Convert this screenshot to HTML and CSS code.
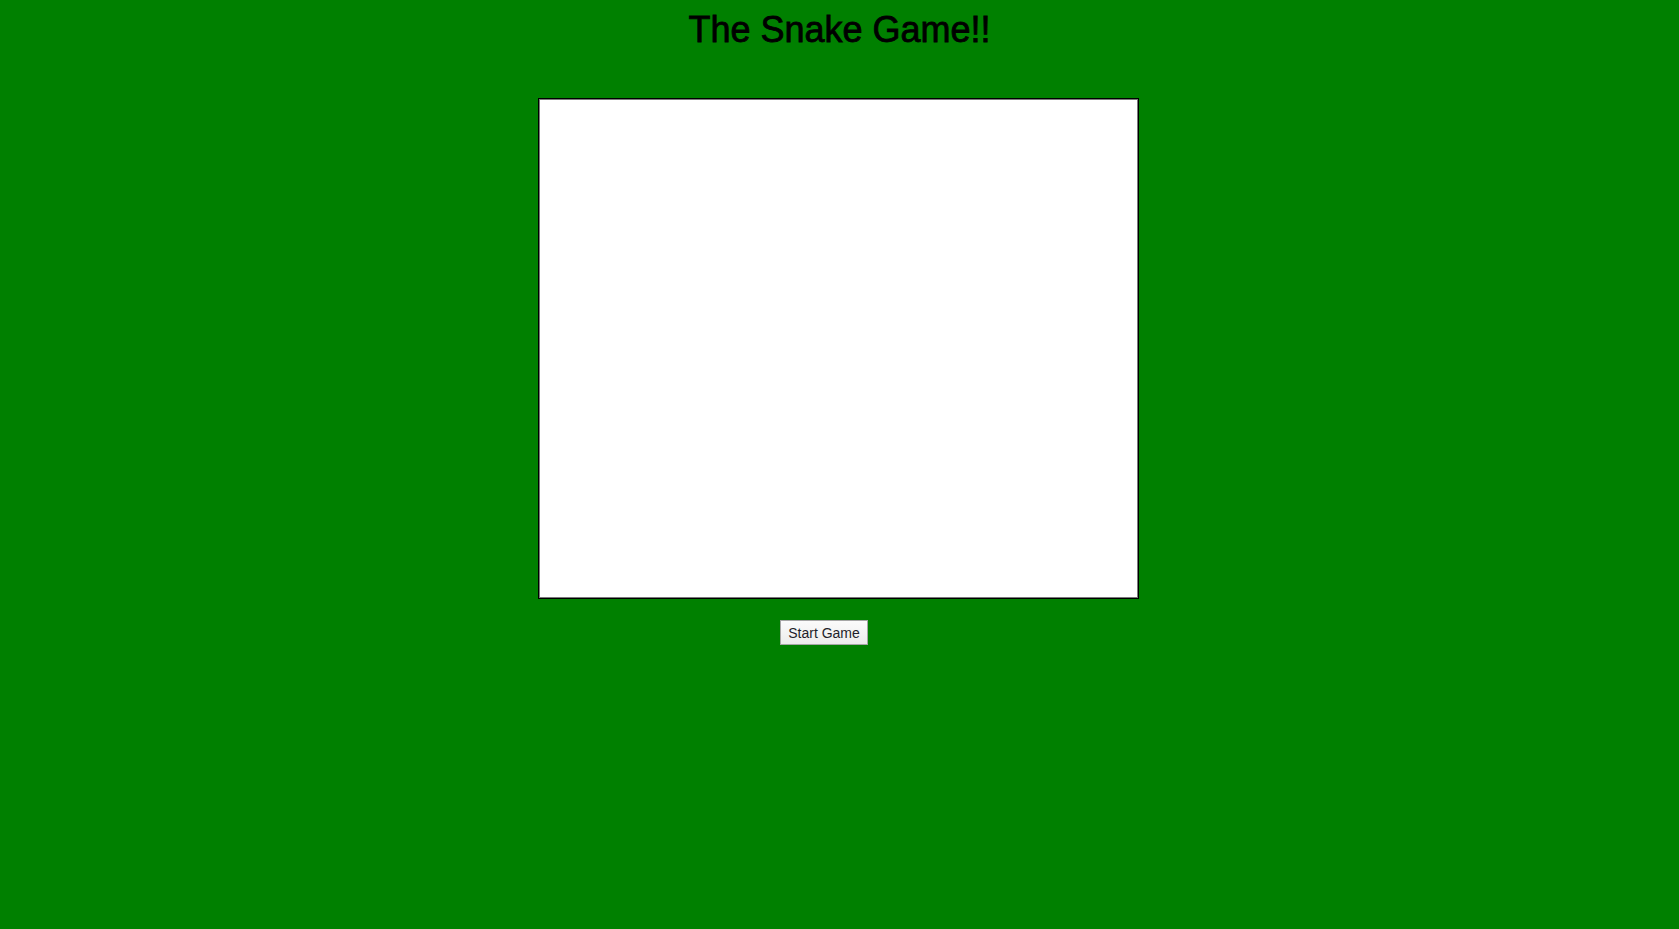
FILE: index.html
```html
<!DOCTYPE html>
<html>
<head>
<meta charset="utf-8">
<title>The Snake Game!!</title>
<link rel="stylesheet" href="styles.css">
</head>
<body>
<main class="page">
  <h1 class="title">The Snake Game!!</h1>
  <div class="board"></div>
  <div class="controls">
    <button class="start-btn" type="button">Start Game</button>
  </div>
</main>
</body>
</html>
```

FILE: styles.css
```css
html, body {
  margin: 0;
  padding: 0;
  background: #008000;
  height: 100%;
}

.page {
  display: flex;
  flex-direction: column;
  align-items: center;
  font-family: "Liberation Sans", Arial, sans-serif;
}

.title {
  margin: 9px 0 0;
  font-size: 36px;
  font-weight: normal;
  line-height: 41px;
  color: #000;
  -webkit-text-stroke: 0.8px #000;
}

.board {
  margin-top: 48px;
  margin-right: 2px;
  width: 599px;
  height: 499px;
  background: #fff;
  border: 1px solid #000;
  box-shadow: inset 0 0 0 1px #7a7a7a;
}

.controls {
  margin-top: 21px;
  padding-right: 31px;
  display: flex;
  justify-content: center;
}

.start-btn {
  width: 88px;
  height: 25px;
  padding: 0;
  font-family: "Liberation Sans", Arial, sans-serif;
  font-size: 14px;
  color: #1e1e2a;
  background: linear-gradient(#fbfbfb, #ececec);
  border: 1px solid #a6a6a6;
  border-radius: 0;
}
```
